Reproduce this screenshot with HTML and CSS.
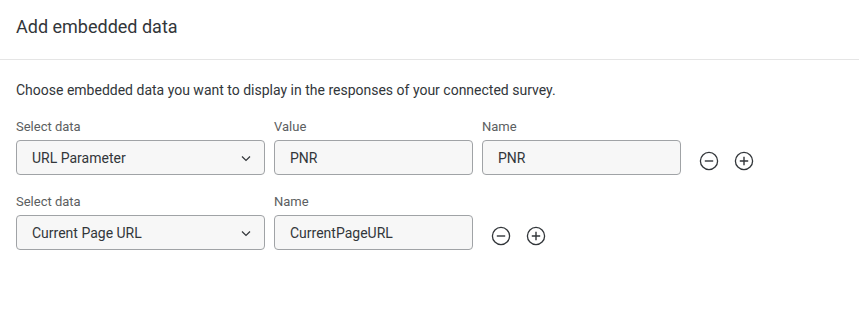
FILE: index.html
```html
<!DOCTYPE html>
<html lang="en">
<head>
  <meta charset="UTF-8" />
  <title>Add embedded data</title>
  <link rel="stylesheet" href="styles.css">
</head>
<body>
  <div class="dialog">
    <header class="dlg-header"><h1>Add embedded data</h1></header>
    <section class="dlg-body">
      <p class="intro">Choose embedded data you want to display in the responses of your connected survey.</p>

      <div class="row">
        <div class="field wide"><label>Select data</label>
          <div class="box select"><span>URL Parameter</span>
            <svg class="chev" width="12" height="12" viewBox="0 0 12 12"><path d="M2 4.5l4 4 4-4" fill="none" stroke="#32363a" stroke-width="1.2"/></svg>
          </div>
        </div>
        <div class="field"><label>Value</label><div class="box">PNR</div></div>
        <div class="field"><label>Name</label><div class="box">PNR</div></div>
        <div class="actions">
          <svg width="20" height="20" viewBox="0 0 20 20"><circle cx="10" cy="10" r="8.6" fill="none" stroke="#32363a" stroke-width="1.3"/><path d="M5.8 10h8.4" stroke="#32363a" stroke-width="1.4"/></svg>
          <svg width="20" height="20" viewBox="0 0 20 20"><circle cx="10" cy="10" r="8.6" fill="none" stroke="#32363a" stroke-width="1.3"/><path d="M5.8 10h8.4M10 5.8v8.4" stroke="#32363a" stroke-width="1.4"/></svg>
        </div>
      </div>

      <div class="row">
        <div class="field wide"><label>Select data</label>
          <div class="box select"><span>Current Page URL</span>
            <svg class="chev" width="12" height="12" viewBox="0 0 12 12"><path d="M2 4.5l4 4 4-4" fill="none" stroke="#32363a" stroke-width="1.2"/></svg>
          </div>
        </div>
        <div class="field"><label>Name</label><div class="box">CurrentPageURL</div></div>
        <div class="actions">
          <svg width="20" height="20" viewBox="0 0 20 20"><circle cx="10" cy="10" r="8.6" fill="none" stroke="#32363a" stroke-width="1.3"/><path d="M5.8 10h8.4" stroke="#32363a" stroke-width="1.4"/></svg>
          <svg width="20" height="20" viewBox="0 0 20 20"><circle cx="10" cy="10" r="8.6" fill="none" stroke="#32363a" stroke-width="1.3"/><path d="M5.8 10h8.4M10 5.8v8.4" stroke="#32363a" stroke-width="1.4"/></svg>
        </div>
      </div>
    </section>
  </div>
</body>
</html>
```

FILE: styles.css
```css
*{box-sizing:border-box;margin:0;padding:0}
body{font-family:Roboto,'Liberation Sans',sans-serif;background:#fff;color:#32363a}
.dialog{width:859px;height:323px;background:#fff}
/* header */
.dlg-header{height:60px;border-bottom:1px solid #e5e5e5;padding:15px 16px 0}
.dlg-header h1{font-size:18px;line-height:24px;font-weight:400;color:#32363a}
/* body */
.dlg-body{padding:20px 16px}
.intro{font-size:14px;line-height:20px;color:#32363a;margin-bottom:18px}
.row{display:flex;align-items:flex-end;gap:9px;margin-bottom:18px}
.field{display:flex;flex-direction:column;flex:none;width:199px}
.field.wide{width:249px}
.field label{font-size:13px;line-height:18px;color:#5b5e61;margin-bottom:4px}
.box{height:35px;border:1px solid #a0a3a6;border-radius:4px;background:#f7f7f7;padding:0 15px;display:flex;align-items:center;font-size:14px;color:#32363a}
.select{justify-content:space-between}
.chev{margin-right:-3px}
.actions{display:flex;gap:15px;height:35px;padding-top:7px;align-items:center;margin-left:9px}
```
